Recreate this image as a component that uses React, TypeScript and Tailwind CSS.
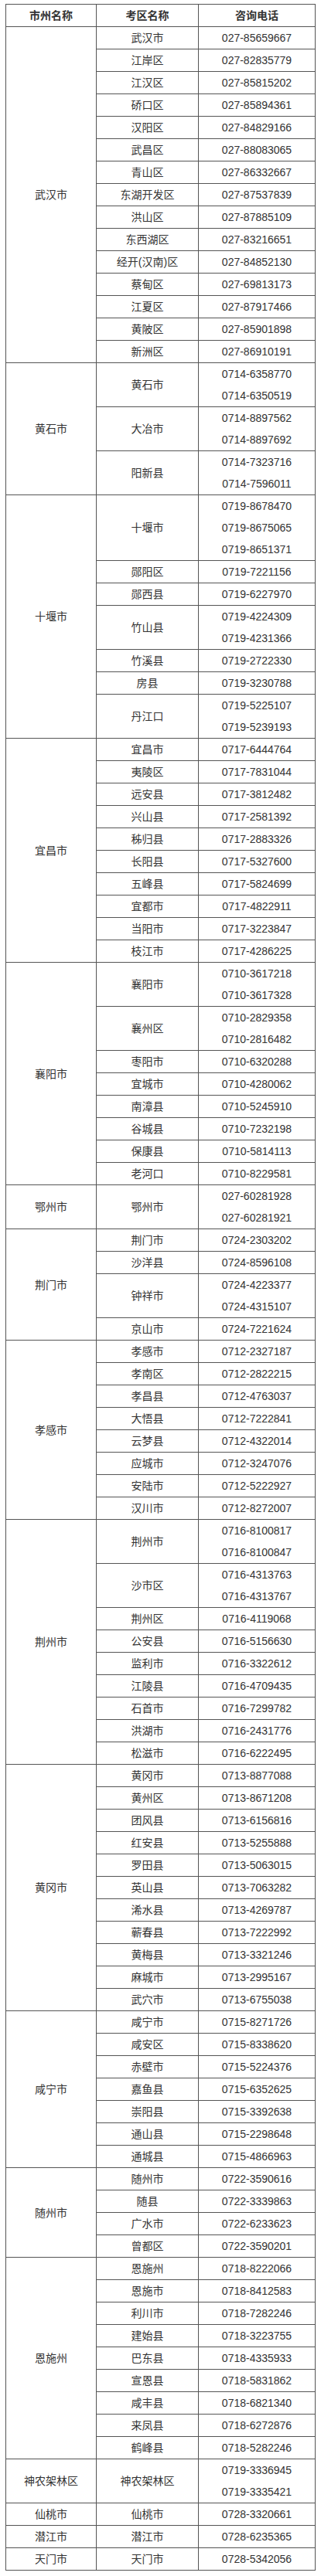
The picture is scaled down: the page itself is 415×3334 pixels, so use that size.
import React from "react";

interface District {
  name: string;
  phones: string[];
}

interface CityGroup {
  city: string;
  districts: District[];
}

const d = (name: string, ...phones: string[]): District => ({ name, phones });

const GROUPS: CityGroup[] = [
  {
    city: "武汉市",
    districts: [
      d("武汉市", "027-85659667"),
      d("江岸区", "027-82835779"),
      d("江汉区", "027-85815202"),
      d("硚口区", "027-85894361"),
      d("汉阳区", "027-84829166"),
      d("武昌区", "027-88083065"),
      d("青山区", "027-86332667"),
      d("东湖开发区", "027-87537839"),
      d("洪山区", "027-87885109"),
      d("东西湖区", "027-83216651"),
      d("经开(汉南)区", "027-84852130"),
      d("蔡甸区", "027-69813173"),
      d("江夏区", "027-87917466"),
      d("黄陂区", "027-85901898"),
      d("新洲区", "027-86910191"),
    ],
  },
  {
    city: "黄石市",
    districts: [
      d("黄石市", "0714-6358770", "0714-6350519"),
      d("大冶市", "0714-8897562", "0714-8897692"),
      d("阳新县", "0714-7323716", "0714-7596011"),
    ],
  },
  {
    city: "十堰市",
    districts: [
      d("十堰市", "0719-8678470", "0719-8675065", "0719-8651371"),
      d("郧阳区", "0719-7221156"),
      d("郧西县", "0719-6227970"),
      d("竹山县", "0719-4224309", "0719-4231366"),
      d("竹溪县", "0719-2722330"),
      d("房县", "0719-3230788"),
      d("丹江口", "0719-5225107", "0719-5239193"),
    ],
  },
  {
    city: "宜昌市",
    districts: [
      d("宜昌市", "0717-6444764"),
      d("夷陵区", "0717-7831044"),
      d("远安县", "0717-3812482"),
      d("兴山县", "0717-2581392"),
      d("秭归县", "0717-2883326"),
      d("长阳县", "0717-5327600"),
      d("五峰县", "0717-5824699"),
      d("宜都市", "0717-4822911"),
      d("当阳市", "0717-3223847"),
      d("枝江市", "0717-4286225"),
    ],
  },
  {
    city: "襄阳市",
    districts: [
      d("襄阳市", "0710-3617218", "0710-3617328"),
      d("襄州区", "0710-2829358", "0710-2816482"),
      d("枣阳市", "0710-6320288"),
      d("宜城市", "0710-4280062"),
      d("南漳县", "0710-5245910"),
      d("谷城县", "0710-7232198"),
      d("保康县", "0710-5814113"),
      d("老河口", "0710-8229581"),
    ],
  },
  {
    city: "鄂州市",
    districts: [d("鄂州市", "027-60281928", "027-60281921")],
  },
  {
    city: "荆门市",
    districts: [
      d("荆门市", "0724-2303202"),
      d("沙洋县", "0724-8596108"),
      d("钟祥市", "0724-4223377", "0724-4315107"),
      d("京山市", "0724-7221624"),
    ],
  },
  {
    city: "孝感市",
    districts: [
      d("孝感市", "0712-2327187"),
      d("孝南区", "0712-2822215"),
      d("孝昌县", "0712-4763037"),
      d("大悟县", "0712-7222841"),
      d("云梦县", "0712-4322014"),
      d("应城市", "0712-3247076"),
      d("安陆市", "0712-5222927"),
      d("汉川市", "0712-8272007"),
    ],
  },
  {
    city: "荆州市",
    districts: [
      d("荆州市", "0716-8100817", "0716-8100847"),
      d("沙市区", "0716-4313763", "0716-4313767"),
      d("荆州区", "0716-4119068"),
      d("公安县", "0716-5156630"),
      d("监利市", "0716-3322612"),
      d("江陵县", "0716-4709435"),
      d("石首市", "0716-7299782"),
      d("洪湖市", "0716-2431776"),
      d("松滋市", "0716-6222495"),
    ],
  },
  {
    city: "黄冈市",
    districts: [
      d("黄冈市", "0713-8877088"),
      d("黄州区", "0713-8671208"),
      d("团风县", "0713-6156816"),
      d("红安县", "0713-5255888"),
      d("罗田县", "0713-5063015"),
      d("英山县", "0713-7063282"),
      d("浠水县", "0713-4269787"),
      d("蕲春县", "0713-7222992"),
      d("黄梅县", "0713-3321246"),
      d("麻城市", "0713-2995167"),
      d("武穴市", "0713-6755038"),
    ],
  },
  {
    city: "咸宁市",
    districts: [
      d("咸宁市", "0715-8271726"),
      d("咸安区", "0715-8338620"),
      d("赤壁市", "0715-5224376"),
      d("嘉鱼县", "0715-6352625"),
      d("崇阳县", "0715-3392638"),
      d("通山县", "0715-2298648"),
      d("通城县", "0715-4866963"),
    ],
  },
  {
    city: "随州市",
    districts: [
      d("随州市", "0722-3590616"),
      d("随县", "0722-3339863"),
      d("广水市", "0722-6233623"),
      d("曾都区", "0722-3590201"),
    ],
  },
  {
    city: "恩施州",
    districts: [
      d("恩施州", "0718-8222066"),
      d("恩施市", "0718-8412583"),
      d("利川市", "0718-7282246"),
      d("建始县", "0718-3223755"),
      d("巴东县", "0718-4335933"),
      d("宣恩县", "0718-5831862"),
      d("咸丰县", "0718-6821340"),
      d("来凤县", "0718-6272876"),
      d("鹤峰县", "0718-5282246"),
    ],
  },
  {
    city: "神农架林区",
    districts: [d("神农架林区", "0719-3336945", "0719-3335421")],
  },
  { city: "仙桃市", districts: [d("仙桃市", "0728-3320661")] },
  { city: "潜江市", districts: [d("潜江市", "0728-6235365")] },
  { city: "天门市", districts: [d("天门市", "0728-5342056")] },
];

const cell = "border border-[#555] p-0 text-center align-middle";

export default function App() {
  return (
    <div className="min-h-screen bg-white pl-[7px] pt-[5px] font-['Liberation_Sans','Noto_Sans_CJK_SC',sans-serif] text-[14px] text-[#333]">
      <table className="w-[400px] table-fixed border-collapse border border-[#555]">
        <colgroup>
          <col className="w-[117px]" />
          <col className="w-[132px]" />
          <col className="w-[151px]" />
        </colgroup>
        <thead>
          <tr>
            <th className={`${cell} font-bold leading-[28px]`}>市州名称</th>
            <th className={`${cell} font-bold leading-[28px]`}>考区名称</th>
            <th className={`${cell} font-bold leading-[28px]`}>咨询电话</th>
          </tr>
        </thead>
        <tbody>
          {GROUPS.map((group) =>
            group.districts.map((district, i) => (
              <tr key={`${group.city}-${district.name}`}>
                {i === 0 ? (
                  <td className={`${cell} leading-[28px]`} rowSpan={group.districts.length}>
                    {group.city}
                  </td>
                ) : null}
                <td className={`${cell} leading-[28px]`}>{district.name}</td>
                <td className={cell}>
                  {district.phones.map((phone) => (
                    <div key={phone} className="h-[28px] leading-[28px]">
                      {phone}
                    </div>
                  ))}
                </td>
              </tr>
            )),
          )}
        </tbody>
      </table>
    </div>
  );
}
